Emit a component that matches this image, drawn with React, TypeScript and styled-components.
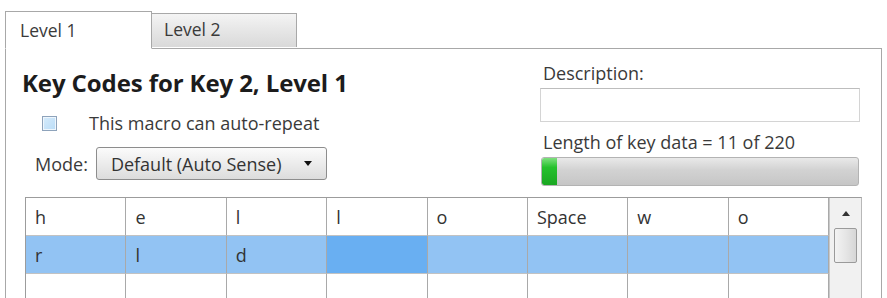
import React from "react";
import styled, { createGlobalStyle } from "styled-components";

const Global = createGlobalStyle`
  html, body { margin: 0; padding: 0; background: #ffffff; }
  body { font-family: "Open Sans", "Noto Sans", sans-serif; color: #333; overflow: hidden; }
  #root { width: 887px; height: 298px; overflow: hidden; }
`;

const Page = styled.div`
  width: 887px;
  height: 298px;
  padding: 10px 0 0 5px;
  box-sizing: border-box;
  overflow: hidden;
`;

const TabStrip = styled.div`
  display: flex;
  align-items: flex-end;
  height: 38px;
  position: relative;
  z-index: 1;
`;

const Tab = styled.div<{ $active?: boolean }>`
  box-sizing: border-box;
  width: ${(p) => (p.$active ? 147 : 145)}px;
  height: ${(p) => (p.$active ? 38 : 34)}px;
  padding: ${(p) => (p.$active ? "6px 0 0 14px" : "3px 0 0 12px")};
  font-size: 17.5px;
  line-height: 24px;
  color: #3a3a3a;
  border: 1px solid #a8a8a8;
  border-bottom: ${(p) => (p.$active ? "1px solid #ffffff" : "none")};
  border-left: ${(p) => (p.$active ? "1px solid #a8a8a8" : "none")};
  background: ${(p) =>
    p.$active ? "#ffffff" : "linear-gradient(#f4f4f4, #e6e6e6 50%, #d9d9d9)"};
  margin-bottom: ${(p) => (p.$active ? "-1px" : "1px")};
`;

const Panel = styled.div`
  width: 877px;
  box-sizing: border-box;
  border: 1px solid #a8a8a8;
  height: 260px;
  background: #fff;
`;

const TopSection = styled.div`
  display: flex;
  height: 148px;
`;

const LeftCol = styled.div`
  width: 534px;
  padding: 20px 0 0 16px;
  box-sizing: border-box;
  display: flex;
  flex-direction: column;
`;

const Heading = styled.div`
  font-size: 24px;
  font-weight: 700;
  color: #1c1c1c;
  line-height: 28px;
  letter-spacing: -0.1px;
`;

const CheckRow = styled.label`
  display: flex;
  align-items: center;
  margin: 16px 0 0 20px;
  height: 20px;
  font-size: 18px;
  color: #3a3a3a;
  gap: 32px;
`;

const CheckBox = styled.span`
  width: 13px;
  height: 13px;
  flex: none;
  border: 1px solid #8ea3bb;
  background: linear-gradient(135deg, #d6ebfb, #b9dcf7);
  box-shadow: inset 0 0 0 1px #eef6fd;
`;

const ModeRow = styled.div`
  display: flex;
  align-items: center;
  margin: 14px 0 0 13px;
  gap: 8px;
  font-size: 18px;
  color: #3a3a3a;
`;

const Select = styled.div`
  box-sizing: border-box;
  width: 231px;
  height: 33px;
  border: 1px solid #8d8d8d;
  border-radius: 3px;
  background: linear-gradient(#fbfbfb, #ececec 50%, #dcdcdc);
  display: flex;
  align-items: center;
  padding-left: 14px;
  font-size: 18px;
  color: #333;
  gap: 23px;
`;

const Arrow = styled.span`
  width: 0;
  height: 0;
  border-left: 4px solid transparent;
  border-right: 4px solid transparent;
  border-top: 5px solid #111;
`;

const RightCol = styled.div`
  width: 320px;
  padding-top: 15px;
  display: flex;
  flex-direction: column;
`;

const Label = styled.div`
  font-size: 18px;
  color: #3a3a3a;
  line-height: 18px;
  padding-left: 3px;
`;

const TextBox = styled.div`
  box-sizing: border-box;
  height: 34px;
  margin-top: 6px;
  border: 1px solid #d4d4d4;
  border-top-color: #bdbdbd;
  background: #fff;
`;

const LengthLabel = styled(Label)`
  margin-top: 11px;
`;

const Progress = styled.div`
  box-sizing: border-box;
  width: 318px;
  height: 29px;
  margin: 6px 0 0 1px;
  border: 1px solid #b3b3b3;
  border-radius: 3px;
  background: linear-gradient(#e9e9e9, #d2d2d2 45%, #c6c6c6);
  overflow: hidden;
  display: flex;
`;

const ProgressFill = styled.div`
  height: 100%;
  background: linear-gradient(#7ee07e, #25c12c 35%, #1aa722);
  border-radius: 2px 0 0 2px;
`;

const Grid = styled.div`
  margin: 0 0 0 19px;
  width: 837px;
  box-sizing: border-box;
  border: 1px solid #9c9c9c;
  border-right: 1px solid #b8b8b8;
  display: flex;
  height: 120px;
`;

const Table = styled.div`
  width: 803px;
  display: grid;
  grid-template-columns: repeat(8, 100.4px);
  grid-auto-rows: 38px;
  align-content: start;
`;

const Cell = styled.div<{ $sel?: boolean; $focus?: boolean }>`
  box-sizing: border-box;
  border-right: 1px solid #a9a9a9;
  border-bottom: 1px solid #c2c2c2;
  padding-left: 9px;
  display: flex;
  align-items: center;
  font-size: 18px;
  color: #333;
  background: ${(p) => (p.$focus ? "#69aff2" : p.$sel ? "#92c3f3" : "#fff")};
`;

const ScrollBar = styled.div`
  width: 32px;
  border-left: 1px solid #c8c8c8;
  background: #f1f1f1;
  display: flex;
  flex-direction: column;
  align-items: center;
`;

const UpArrow = styled.span`
  margin-top: 13px;
  width: 0;
  height: 0;
  border-left: 4px solid transparent;
  border-right: 4px solid transparent;
  border-bottom: 5px solid #333;
`;

const Thumb = styled.div`
  margin-top: 12px;
  width: 23px;
  height: 35px;
  box-sizing: border-box;
  border: 1px solid #9a9a9a;
  border-radius: 2px;
  background: linear-gradient(90deg, #f3f3f3, #e6e6e6 50%, #d6d6d6);
`;

const rows: string[][] = [
  ["h", "e", "l", "l", "o", "Space", "w", "o"],
  ["r", "l", "d", "", "", "", "", ""],
  ["", "", "", "", "", "", "", ""],
];

export default function App() {
  return (
    <>
      <Global />
      <Page>
        <TabStrip>
          <Tab $active>Level 1</Tab>
          <Tab>Level 2</Tab>
        </TabStrip>
        <Panel>
          <TopSection>
            <LeftCol>
              <Heading>Key Codes for Key 2, Level 1</Heading>
              <CheckRow>
                <CheckBox />
                This macro can auto-repeat
              </CheckRow>
              <ModeRow>
                Mode:
                <Select>
                  Default (Auto Sense)
                  <Arrow />
                </Select>
              </ModeRow>
            </LeftCol>
            <RightCol>
              <Label>Description:</Label>
              <TextBox />
              <LengthLabel>Length of key data = 11 of 220</LengthLabel>
              <Progress>
                <ProgressFill style={{ width: `${(11 / 220) * 100 * 0.95}%` }} />
              </Progress>
            </RightCol>
          </TopSection>
          <Grid>
            <Table>
              {rows.map((r, ri) =>
                r.map((c, ci) => (
                  <Cell key={`${ri}-${ci}`} $sel={ri === 1} $focus={ri === 1 && ci === 3}>
                    {c}
                  </Cell>
                ))
              )}
            </Table>
            <ScrollBar>
              <UpArrow />
              <Thumb />
            </ScrollBar>
          </Grid>
        </Panel>
      </Page>
    </>
  );
}
